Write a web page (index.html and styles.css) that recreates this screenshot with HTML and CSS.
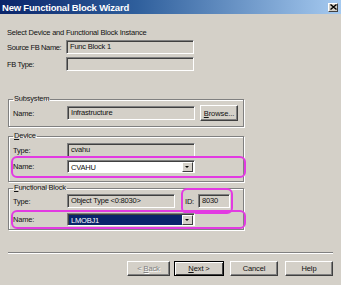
FILE: index.html
```html
<!DOCTYPE html>
<html lang="en">
<head>
<meta charset="UTF-8">
<title>New Functional Block Wizard</title>
<link rel="stylesheet" href="styles.css">
</head>
<body>
<div class="window">
    <div class="titlebar">
        <span>New Functional Block Wizard</span>
        <span class="close">
            <svg width="7" height="6" viewBox="0 0 7 6"><path d="M0.5 0.5 L6.5 5.5 M6.5 0.5 L0.5 5.5" stroke="#000" stroke-width="1.4"/></svg>
        </span>
    </div>
    <div class="content">
        <p class="intro">Select Device and Functional Block Instance</p>
        <div class="row r1">
            <span class="lbl top">Source FB Name:</span>
            <div class="field">Func Block 1</div>
        </div>
        <div class="row r2">
            <span class="lbl top">FB Type:</span>
            <div class="field"></div>
        </div>

        <fieldset class="group sub">
            <legend>Subsystem</legend>
            <div class="row">
                <span class="lbl">Name:</span>
                <div class="field">Infrastructure</div>
                <button class="btn browse"><u>B</u>rowse...</button>
            </div>
        </fieldset>

        <fieldset class="group dev">
            <legend><u>D</u>evice</legend>
            <div class="row">
                <span class="lbl">Type:</span>
                <div class="field">cvahu</div>
            </div>
            <div class="row name hl">
                <span class="lbl">Name:</span>
                <div class="select"><span class="val">CVAHU</span><span class="arrow"></span></div>
            </div>
        </fieldset>

        <fieldset class="group fb">
            <legend><u>F</u>unctional Block</legend>
            <div class="row">
                <span class="lbl">Type:</span>
                <div class="field short">Object Type &lt;0:8030&gt;</div>
                <div class="idbox hl">
                    <span>ID:</span>
                    <div class="field tiny">8030</div>
                </div>
            </div>
            <div class="row name hl">
                <span class="lbl">Name:</span>
                <div class="select"><span class="val picked">LMOBJ1</span><span class="arrow"></span></div>
            </div>
        </fieldset>
    </div>

    <div class="sep"></div>
    <div class="buttons">
        <button class="btn back" disabled>&lt; <u>B</u>ack</button>
        <button class="btn next"><u>N</u>ext &gt;</button>
        <button class="btn cancel">Cancel</button>
        <button class="btn help">Help</button>
    </div>
</div>
</body>
</html>
```

FILE: styles.css
```css
body {
    margin: 0;
    background: #d4d0c8;
    font-family: "Liberation Sans", Arial, sans-serif;
    font-size: 7.5px;
    letter-spacing: -0.2px;
    color: #111;
}
.window {
    width: 341px;
    height: 285px;
    overflow: hidden;
    white-space: nowrap;
}
.titlebar {
    height: 14px;
    display: flex;
    align-items: center;
    justify-content: space-between;
    padding: 0 3px 0 2px;
    background: linear-gradient(to right, #0a246a, #2f5f9c 40%, #a6caf0);
    color: #fff;
    font-size: 9.5px;
    font-weight: bold;
    letter-spacing: -0.2px;
}
.close {
    width: 10px;
    height: 9px;
    box-sizing: border-box;
    display: flex;
    align-items: center;
    justify-content: center;
    background: #d4d0c8;
    border: 1px solid;
    border-color: #fff #404040 #404040 #fff;
}
.content {
    padding: 14px 7px 0 7px;
}
.intro {
    margin: 0;
    height: 10px;
    line-height: 10px;
}
.row {
    display: flex;
    align-items: center;
}
.r1 {
    margin-top: 2px;
}
.r2 {
    margin-top: 3px;
}
.lbl {
    width: 54px;
    flex: none;
}
.lbl.top {
    width: 59px;
    letter-spacing: -0.35px;
}
.field {
    width: 128px;
    height: 14px;
    box-sizing: border-box;
    padding: 0 3px;
    line-height: 12px;
    border: 1px solid;
    border-color: #808080 #fff #fff #808080;
    box-shadow: inset 1px 1px 0 #404040;
    background: #d4d0c8;
}
.field.short {
    width: 108px;
}
.field.tiny {
    width: 32px;
}
.group {
    width: 236px;
    box-sizing: border-box;
    margin: 0 0 0 1px;
    padding: 1px 4px 5px;
    border: 1px solid #808080;
    box-shadow: 1px 1px 0 #fff, inset 1px 1px 0 #fff;
}
.group legend {
    padding: 0 1px;
    line-height: 10px;
}
.sub {
    margin-top: 23px;
}
.dev {
    margin-top: 4px;
    padding-top: 2px;
    padding-bottom: 8px;
}
.dev .name {
    margin-top: 3px;
}
.fb {
    margin-top: 1px;
    padding-top: 1px;
    padding-bottom: 3px;
}
.fb .name {
    margin-top: 5px;
}
.select {
    width: 128px;
    height: 13px;
    box-sizing: border-box;
    display: flex;
    border: 1px solid;
    border-color: #808080 #fff #fff #808080;
    box-shadow: inset 1px 1px 0 #404040;
    background: #fff;
    padding: 1px 1px 0 1px;
}
.val {
    flex: 1;
    padding-left: 2px;
    line-height: 11px;
    color: #111;
}
.val.picked {
    background: #0a246a;
    color: #fff;
}
.arrow {
    width: 11px;
    height: 10px;
    box-sizing: border-box;
    background: #d4d0c8;
    border: 1px solid;
    border-color: #fff #404040 #404040 #fff;
    position: relative;
}
.arrow::after {
    content: "";
    position: absolute;
    left: 2px;
    top: 3px;
    border-left: 2px solid transparent;
    border-right: 2px solid transparent;
    border-top: 2px solid #000;
}
.hl {
    position: relative;
}
.hl::after {
    content: "";
    position: absolute;
    border: 2px solid #e23ae2;
    border-radius: 6px;
    pointer-events: none;
}
.name.hl::after {
    top: -4px;
    bottom: -5px;
    left: -2px;
    right: -7px;
}
.fb .name.hl::after {
    top: -3px;
    bottom: -3px;
}
.idbox {
    display: flex;
    align-items: center;
    margin-left: 10px;
    gap: 4px;
}
.idbox.hl::after {
    top: -6px;
    bottom: -6px;
    left: -4px;
    right: -3px;
}
.btn {
    font-family: inherit;
    font-size: 7.5px;
    letter-spacing: -0.1px;
    color: #111;
    height: 15px;
    padding: 0;
    background: #d4d0c8;
    border: 1px solid;
    border-color: #fff #404040 #404040 #fff;
    box-shadow: inset -1px -1px 0 #808080;
}
.browse {
    width: 38px;
    height: 16px;
    margin-left: 5px;
}
.sep {
    margin: 22px 8px 0 8px;
    border-top: 1px solid #808080;
    border-bottom: 1px solid #fff;
}
.buttons {
    display: flex;
    justify-content: flex-end;
    padding: 7px 8px 0 0;
}
.back {
    width: 43px;
    color: #808080;
    text-shadow: 1px 1px 0 #fff;
}
.next {
    width: 50px;
    margin-left: 4px;
    border-color: #000;
    box-shadow: inset 1px 1px 0 #fff, inset -1px -1px 0 #404040;
}
.cancel {
    width: 48px;
    margin-left: 6px;
}
.help {
    width: 48px;
    margin-left: 7px;
}
```
